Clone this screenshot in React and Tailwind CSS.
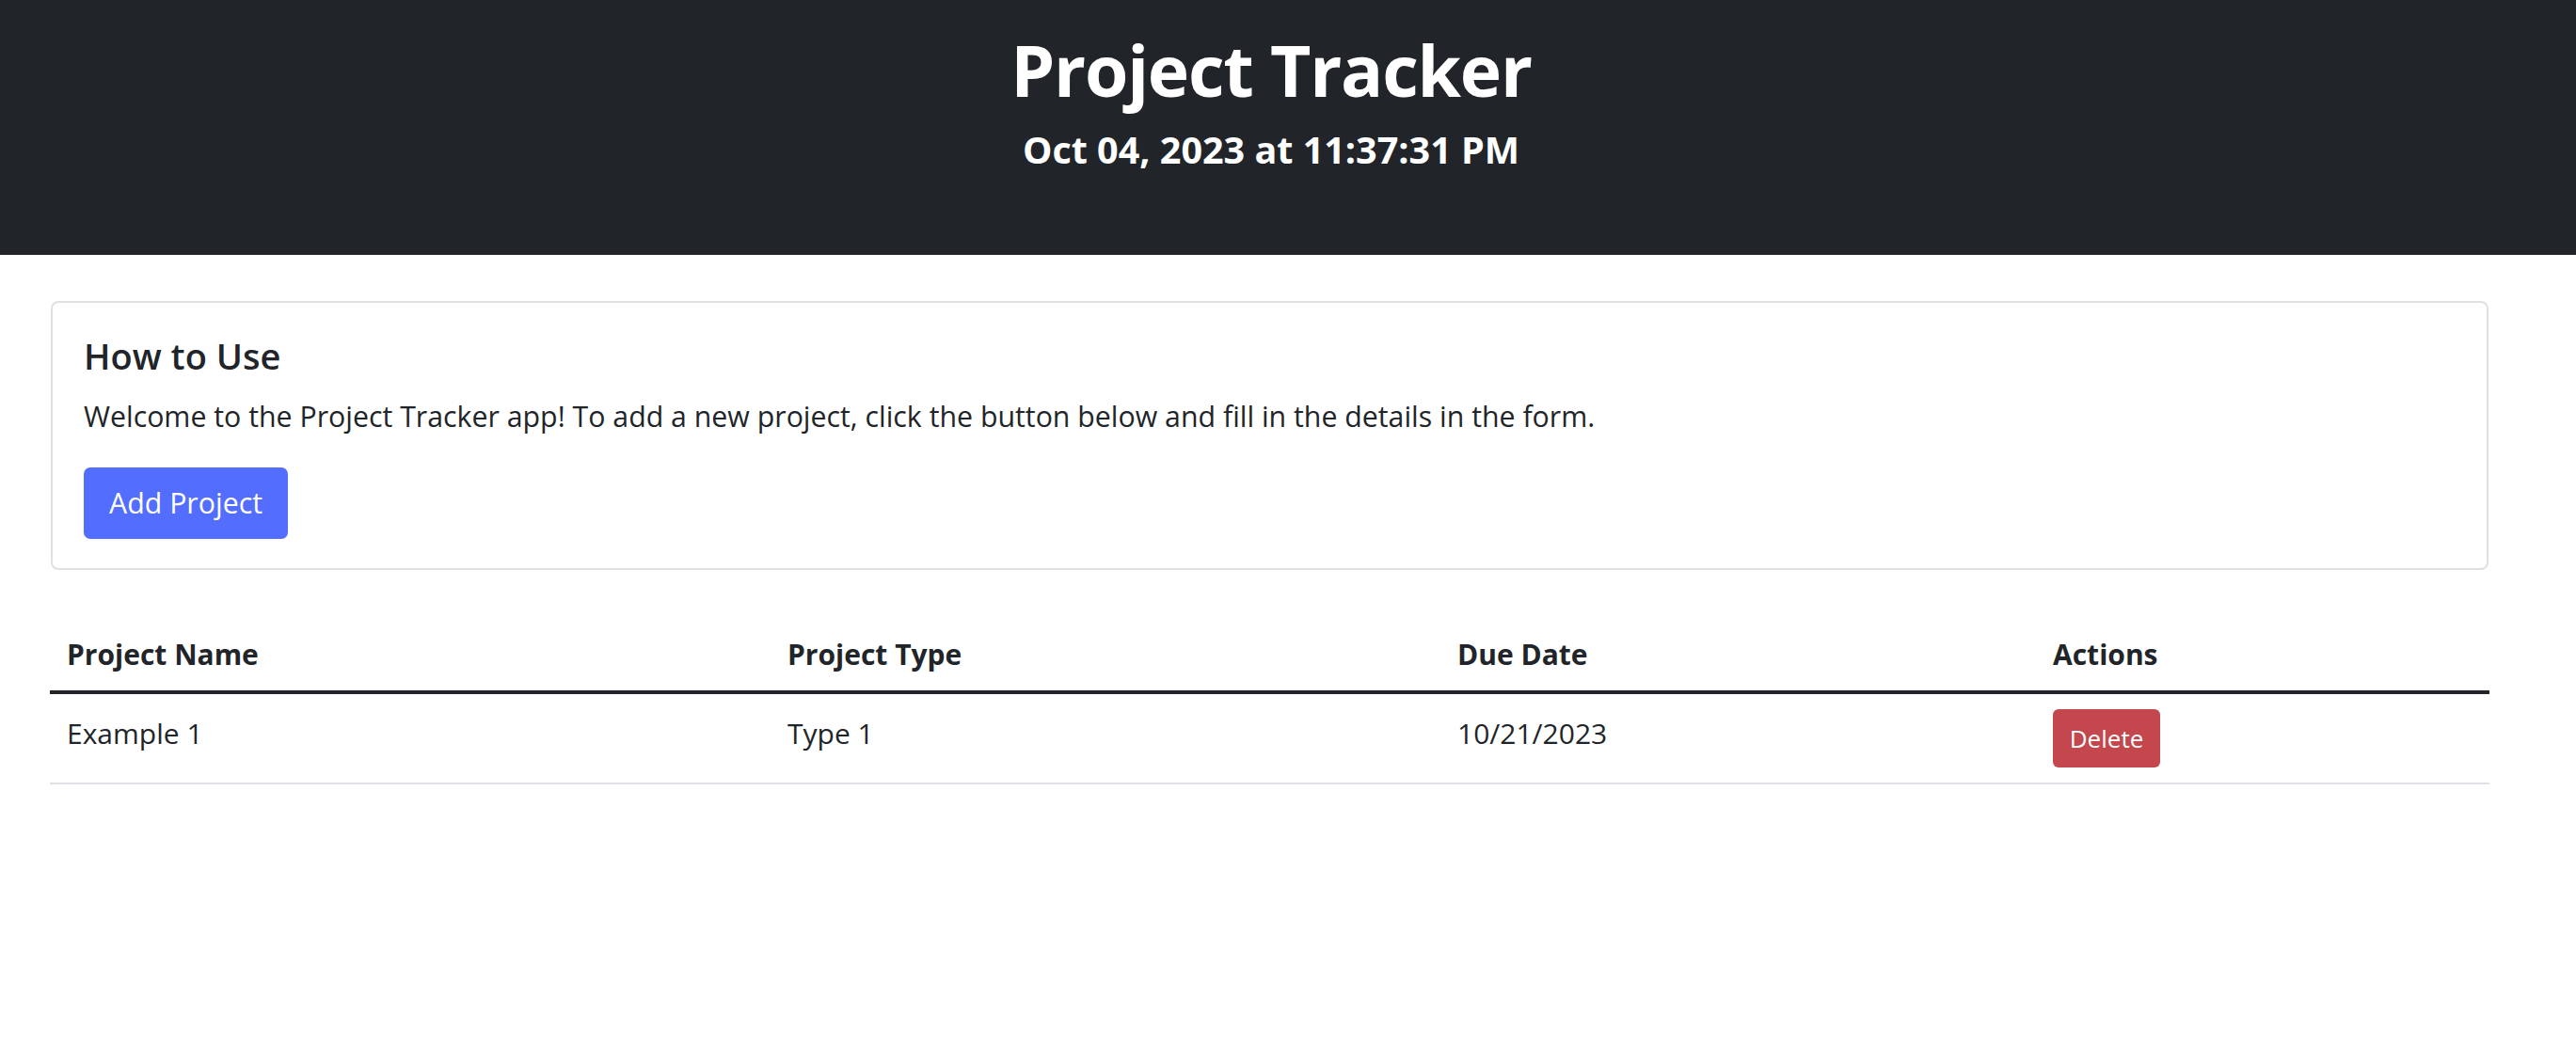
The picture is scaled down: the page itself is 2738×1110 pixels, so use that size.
import React from 'react';

const FONT = '"Open Sans", "Noto Sans", Arial, sans-serif';

const projects = [{ id: 1, name: 'Example 1', type: 'Type 1', due: '10/21/2023' }];

const App = () => {
  return (
    <div className="min-h-screen bg-white text-[#212529]" style={{ fontFamily: FONT }}>
      <header className="h-[271px] bg-[#212529] text-white flex flex-col items-center pt-[29px] pr-[36px]">
        <h1 className="text-[75px] font-bold leading-[1.2] tracking-[-1.2px]">Project Tracker</h1>
        <h2 className="text-[39.5px] font-bold leading-[1.2] mt-[17px]">Oct 04, 2023 at 11:37:31 PM</h2>
      </header>

      <main className="pl-[53px] pr-[92px] pt-[49px]">
        {/* How to use card */}
        <div className="mx-px border-2 border-[#e0e0e0] rounded-[8px] pl-[33px] pr-[33px] pt-[34px] pb-[31px]">
          <h3 className="text-[38px] font-semibold leading-[1.2] mb-[18px]">How to Use</h3>
          <p className="text-[30.3px] leading-[1.5] mb-[32px]">
            Welcome to the Project Tracker app! To add a new project, click the button below and fill in the details in the form.
          </p>
          <button className="h-[76px] w-[217px] flex items-center justify-center bg-[#536dfe] text-white text-[30.3px] rounded-[7px]">
            Add Project
          </button>
        </div>

        {/* Projects table */}
        <table className="w-full table-fixed mt-[51px] border-collapse text-[30px] leading-[1.5]">
          <colgroup>
            <col className="w-[766px]" />
            <col className="w-[712px]" />
            <col className="w-[633px]" />
            <col />
          </colgroup>
          <thead>
            <tr className="border-b-4 border-[#212529]">
              <th className="px-[18px] pt-[16px] pb-[16px] text-left font-bold">Project Name</th>
              <th className="px-[18px] pt-[16px] pb-[16px] text-left font-bold">Project Type</th>
              <th className="px-[18px] pt-[16px] pb-[16px] text-left font-bold">Due Date</th>
              <th className="px-[18px] pt-[16px] pb-[16px] text-left font-bold">Actions</th>
            </tr>
          </thead>
          <tbody>
            {projects.map((p) => (
              <tr key={p.id} className="border-b-2 border-[#dee2e6]">
                <td className="px-[18px] pt-[19px] align-top">{p.name}</td>
                <td className="px-[18px] pt-[19px] align-top">{p.type}</td>
                <td className="px-[18px] pt-[19px] align-top">{p.due}</td>
                <td className="px-[18px] py-[16px] align-top">
                  <button className="h-[62px] w-[114px] flex items-center justify-center bg-[#c3474c] text-white text-[26px] rounded-[6px]">
                    Delete
                  </button>
                </td>
              </tr>
            ))}
          </tbody>
        </table>
      </main>
    </div>
  );
};

export default App;
